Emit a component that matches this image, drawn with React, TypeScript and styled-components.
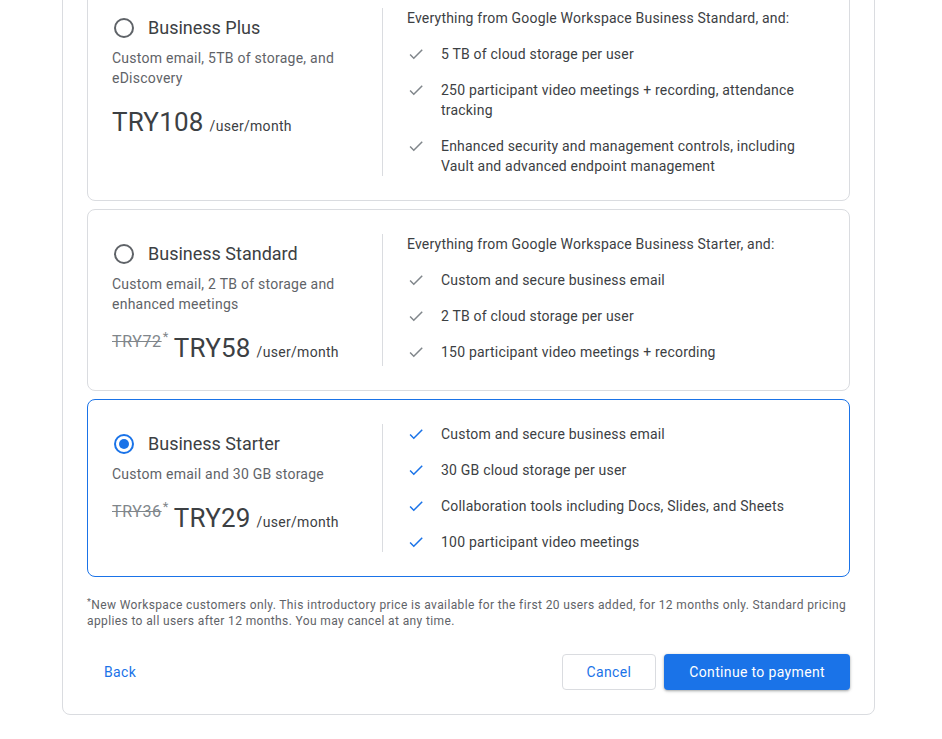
import React, { useState } from 'react';
import styled, { createGlobalStyle, css } from 'styled-components';

const GlobalStyle = createGlobalStyle`
  html, body {
    margin: 0;
    padding: 0;
    background: #ffffff;
    overflow: hidden;
  }
  body {
    font-family: Roboto, "Liberation Sans", Arial, sans-serif;
    color: #3c4043;
    -webkit-font-smoothing: antialiased;
  }
`;

const Page = styled.div`
  width: 942px;
  height: 739px;
  overflow: hidden;
`;

// the page is shown scrolled: the top of the panel sits above the viewport
const Panel = styled.div`
  box-sizing: border-box;
  width: 813px;
  margin: -42px 0 0 62px;
  padding: 24px;
  border: 1px solid #dadce0;
  border-radius: 8px;
  background: #fff;
`;

const PlanList = styled.div`
  display: flex;
  flex-direction: column;
  gap: 8px;
`;

const PlanCard = styled.div<{ $selected: boolean }>`
  display: flex;
  padding: 24px;
  border: 1px solid ${(p) => (p.$selected ? '#1a73e8' : '#dadce0')};
  border-radius: 8px;
  cursor: pointer;
  background: #fff;
`;

const LeftCol = styled.div`
  box-sizing: border-box;
  width: 270px;
  flex-shrink: 0;
  padding-right: 24px;
`;

const RightCol = styled.div`
  flex: 1;
  padding-left: 24px;
  border-left: 1px solid #dadce0;
`;

const TitleRow = styled.div`
  display: flex;
  align-items: center;
  gap: 12px;
  height: 40px;
`;

const RadioBox = styled.span`
  display: flex;
  align-items: center;
  justify-content: center;
  width: 24px;
  height: 24px;
`;

const RadioCircle = styled.span<{ $checked: boolean }>`
  box-sizing: border-box;
  display: flex;
  align-items: center;
  justify-content: center;
  width: 20px;
  height: 20px;
  border-radius: 50%;
  border: 2px solid ${(p) => (p.$checked ? '#1a73e8' : '#5f6368')};

  ${(p) =>
    p.$checked &&
    css`
      &::after {
        content: '';
        width: 10px;
        height: 10px;
        border-radius: 50%;
        background: #1a73e8;
      }
    `}
`;

const PlanName = styled.span`
  font-size: 18px;
  line-height: 24px;
  color: #3c4043;
`;

const Description = styled.div`
  font-size: 14px;
  line-height: 20px;
  letter-spacing: 0.25px;
  color: #5f6368;
`;

const PriceRow = styled.div`
  display: flex;
  align-items: flex-start;
  margin-top: 16px;
  gap: 5px;
`;

const OldPrice = styled.span`
  margin-top: 2px;
  font-size: 16px;
  line-height: 20px;
  letter-spacing: 0.6px;
  color: #80868b;
  text-decoration: line-through;

  sup {
    font-size: 13px;
    line-height: 0;
    text-decoration: none;
    display: inline-block;
    margin-left: 1px;
    vertical-align: 6px;
  }
`;

const MainPrice = styled.span`
  display: flex;
  align-items: baseline;
  gap: 6px;
`;

const Amount = styled.span`
  font-size: 26px;
  line-height: 36px;
  letter-spacing: 0.2px;
  color: #3c4043;
`;

const Unit = styled.span`
  font-size: 14px;
  letter-spacing: 0.3px;
  color: #3c4043;
`;

const Intro = styled.div`
  font-size: 14px;
  line-height: 20px;
  letter-spacing: 0.2px;
  color: #3c4043;
  margin-bottom: 16px;
`;

const FeatureList = styled.ul`
  list-style: none;
  margin: 0;
  padding: 0;
  display: flex;
  flex-direction: column;
  gap: 16px;
`;

const Feature = styled.li`
  display: flex;
  align-items: flex-start;
  gap: 16px;
  font-size: 14px;
  line-height: 20px;
  letter-spacing: 0.2px;
  color: #3c4043;
`;

const CheckIcon = styled.svg<{ $active: boolean }>`
  flex-shrink: 0;
  width: 18px;
  height: 18px;
  margin-top: 1px;
  fill: ${(p) => (p.$active ? '#1a73e8' : '#80868b')};
`;

const Footnote = styled.p`
  margin: 20px 0 0;
  font-size: 12px;
  line-height: 16px;
  letter-spacing: 0.38px;
  color: #5f6368;
`;

const FootnoteMark = styled.span`
  display: inline-block;
  font-size: 9px;
  line-height: 9px;
  vertical-align: top;
  margin-top: 1px;
`;

const Actions = styled.div`
  display: flex;
  justify-content: space-between;
  align-items: center;
  margin-top: 25px;
`;

const ButtonGroup = styled.div`
  display: flex;
  gap: 8px;
`;

const Button = styled.button<{ $variant: 'text' | 'outlined' | 'filled' }>`
  box-sizing: border-box;
  height: 36px;
  padding: 0 ${(p) => (p.$variant === 'text' ? '16px' : '24px')};
  border-radius: 4px;
  font-family: Roboto, "Liberation Sans", Arial, sans-serif;
  font-size: 14px;
  font-weight: 400;
  letter-spacing: 0.35px;
  cursor: pointer;
  border: 1px solid transparent;
  background: transparent;
  color: #1a73e8;

  ${(p) =>
    p.$variant === 'outlined' &&
    css`
      border-color: #dadce0;
      background: #fff;
    `}

  ${(p) =>
    p.$variant === 'filled' &&
    css`
      background: #1a73e8;
      color: #fff;
      box-shadow: 0 1px 2px rgba(60, 64, 67, 0.3), 0 1px 3px 1px rgba(60, 64, 67, 0.15);
    `}
`;

type Plan = {
  id: string;
  name: string;
  description: string;
  oldPrice?: string;
  price: string;
  intro?: string;
  features: string[];
};

const plans: Plan[] = [
  {
    id: 'plus',
    name: 'Business Plus',
    description: 'Custom email, 5TB of storage, and eDiscovery',
    price: 'TRY108',
    intro: 'Everything from Google Workspace Business Standard, and:',
    features: [
      '5 TB of cloud storage per user',
      '250 participant video meetings + recording, attendance tracking',
      'Enhanced security and management controls, including Vault and advanced endpoint management',
    ],
  },
  {
    id: 'standard',
    name: 'Business Standard',
    description: 'Custom email, 2 TB of storage and enhanced meetings',
    oldPrice: 'TRY72',
    price: 'TRY58',
    intro: 'Everything from Google Workspace Business Starter, and:',
    features: [
      'Custom and secure business email',
      '2 TB of cloud storage per user',
      '150 participant video meetings + recording',
    ],
  },
  {
    id: 'starter',
    name: 'Business Starter',
    description: 'Custom email and 30 GB storage',
    oldPrice: 'TRY36',
    price: 'TRY29',
    features: [
      'Custom and secure business email',
      '30 GB cloud storage per user',
      'Collaboration tools including Docs, Slides, and Sheets',
      '100 participant video meetings',
    ],
  },
];

const Check: React.FC<{ active: boolean }> = ({ active }) => (
  <CheckIcon $active={active} viewBox="0 0 24 24">
    <path d="M9 16.17L4.83 12l-1.42 1.41L9 19 21 7l-1.41-1.41z" />
  </CheckIcon>
);

const App: React.FC = () => {
  const [selected, setSelected] = useState('starter');

  return (
    <Page>
      <GlobalStyle />
      <Panel>
        <PlanList>
          {plans.map((plan) => {
            const isSelected = plan.id === selected;
            return (
              <PlanCard key={plan.id} $selected={isSelected} onClick={() => setSelected(plan.id)}>
                <LeftCol>
                  <TitleRow>
                    <RadioBox>
                      <RadioCircle $checked={isSelected} />
                    </RadioBox>
                    <PlanName>{plan.name}</PlanName>
                  </TitleRow>
                  <Description>{plan.description}</Description>
                  <PriceRow>
                    {plan.oldPrice && (
                      <OldPrice>
                        {plan.oldPrice}
                        <sup>*</sup>
                      </OldPrice>
                    )}
                    <MainPrice>
                      <Amount>{plan.price}</Amount>
                      <Unit>/user/month</Unit>
                    </MainPrice>
                  </PriceRow>
                </LeftCol>
                <RightCol>
                  {plan.intro && <Intro>{plan.intro}</Intro>}
                  <FeatureList>
                    {plan.features.map((f) => (
                      <Feature key={f}>
                        <Check active={isSelected} />
                        <span>{f}</span>
                      </Feature>
                    ))}
                  </FeatureList>
                </RightCol>
              </PlanCard>
            );
          })}
        </PlanList>

        <Footnote>
          <FootnoteMark>*</FootnoteMark>New Workspace customers only. This introductory price is available for the
          first 20 users added, for 12 months only. Standard pricing applies to all users after 12 months. You may
          cancel at any time.
        </Footnote>

        <Actions>
          <Button $variant="text">Back</Button>
          <ButtonGroup>
            <Button $variant="outlined">Cancel</Button>
            <Button $variant="filled">Continue to payment</Button>
          </ButtonGroup>
        </Actions>
      </Panel>
    </Page>
  );
};

export default App;
